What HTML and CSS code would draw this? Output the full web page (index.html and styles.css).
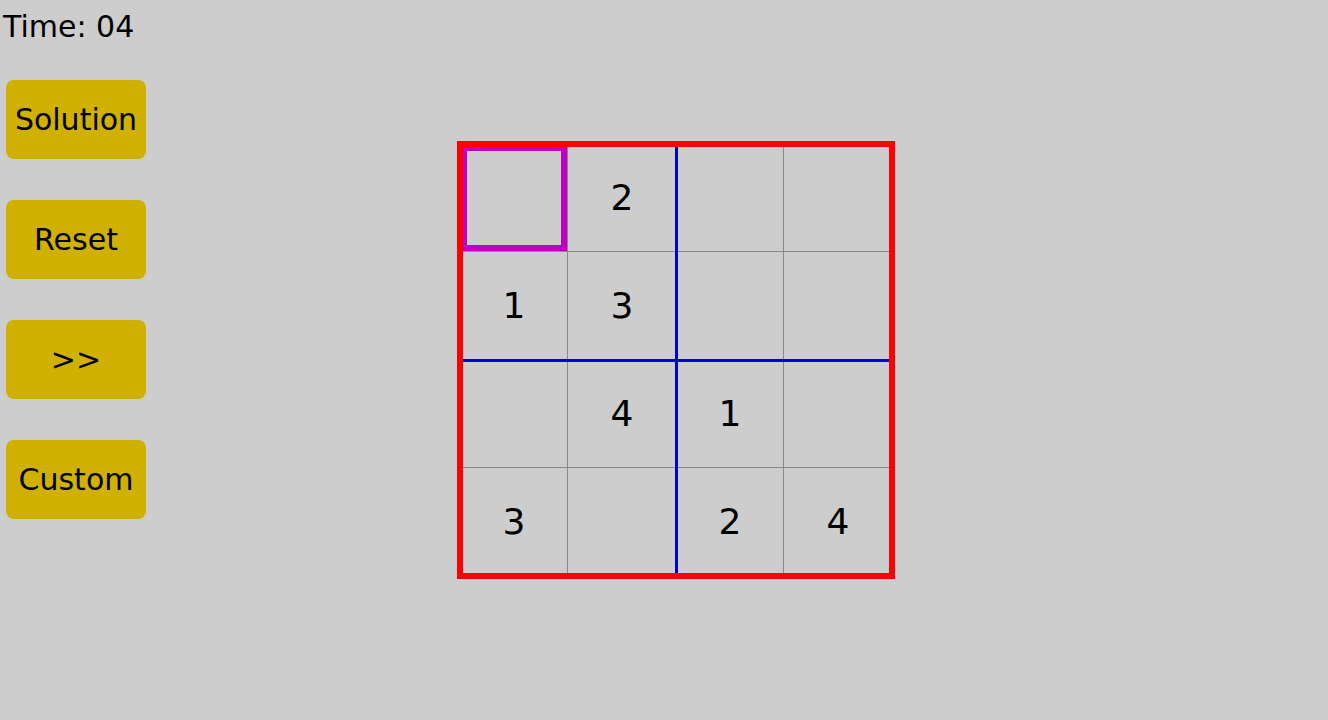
FILE: index.html
```html
<!DOCTYPE html>
<html>
<head>
<meta charset="utf-8">
<link rel="stylesheet" href="styles.css">
</head>
<body>
<div class="app">
  <div class="sidebar">
    <div class="time">Time: 04</div>
    <div class="buttons">
      <button class="btn">Solution</button>
      <button class="btn">Reset</button>
      <button class="btn">&gt;&gt;</button>
      <button class="btn">Custom</button>
    </div>
  </div>
  <div class="board-area">
    <div class="grid">
      <div class="cell selected"></div><div class="cell">2</div><div class="cell"></div><div class="cell"></div>
      <div class="cell">1</div><div class="cell">3</div><div class="cell"></div><div class="cell"></div>
      <div class="cell"></div><div class="cell">4</div><div class="cell">1</div><div class="cell"></div>
      <div class="cell">3</div><div class="cell"></div><div class="cell">2</div><div class="cell">4</div>
    </div>
  </div>
</div>
</body>
</html>
```
FILE: styles.css
```css
html, body {
  margin: 0;
  padding: 0;
  background: #cdcdcd;
  font-family: "DejaVu Sans", sans-serif;
  color: #000;
}
.app {
  display: flex;
  width: 1328px;
  height: 720px;
}
.sidebar {
  width: 160px;
  display: flex;
  flex-direction: column;
}
.time {
  font-size: 30px;
  line-height: 34px;
  padding: 10px 0 0 3px;
}
.buttons {
  display: flex;
  flex-direction: column;
  gap: 41px;
  padding: 36px 0 0 6px;
}
.btn {
  width: 140px;
  height: 79px;
  border: none;
  border-radius: 8px;
  background: #d0b000;
  font-family: "DejaVu Sans", sans-serif;
  font-size: 30px;
  color: #000;
  padding: 0;
}
.board-area {
  flex: 1;
  display: flex;
  align-items: center;
  padding-left: 300px;
}
.grid {
  position: relative;
  display: grid;
  grid-template-columns: repeat(4, 108px);
  grid-template-rows: repeat(4, 108px);
  outline: 6px solid #ff0000;
  outline-offset: -3px;
}
.grid::before {
  content: "";
  position: absolute;
  left: 215px;
  top: 3px;
  width: 3px;
  height: 426px;
  background: #0000dd;
}
.grid::after {
  content: "";
  position: absolute;
  top: 215px;
  left: 3px;
  height: 3px;
  width: 426px;
  background: #0000dd;
}
.cell {
  box-sizing: border-box;
  border-right: 1px solid #888;
  border-bottom: 1px solid #888;
  display: flex;
  align-items: center;
  justify-content: center;
  padding-left: 1px;
  font-size: 36px;
}
.cell.selected {
  outline: 6px solid #c000c0;
  outline-offset: -7px;
}
```
